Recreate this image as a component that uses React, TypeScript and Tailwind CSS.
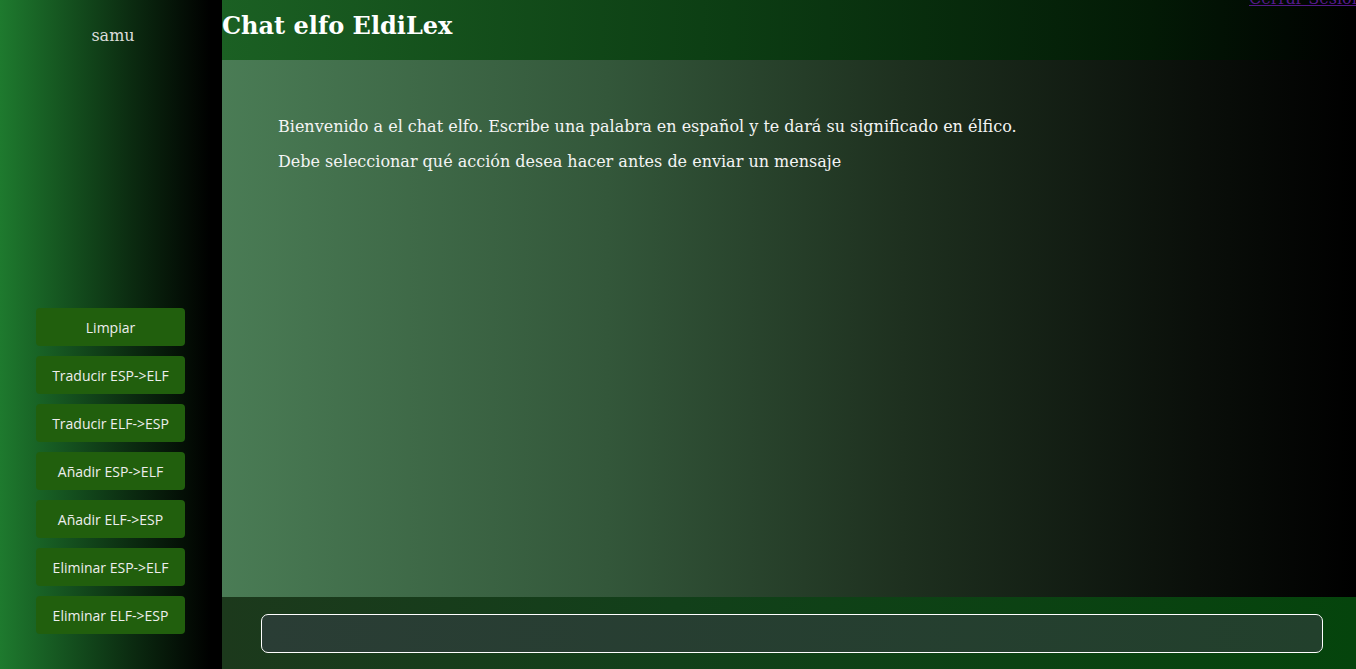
import React from 'react';

const ACTIONS = [
  'Limpiar',
  'Traducir ESP->ELF',
  'Traducir ELF->ESP',
  'Añadir ESP->ELF',
  'Añadir ELF->ESP',
  'Eliminar ESP->ELF',
  'Eliminar ELF->ESP',
];

const serif = "font-['DejaVu_Serif',serif]";

export default function App() {
  return (
    <div className={`flex h-[669px] w-[1356px] overflow-hidden ${serif}`}>
      {/* sidebar */}
      <aside className="flex w-[222px] shrink-0 flex-col bg-[linear-gradient(to_right,#1e7a2e,#0b2a10_60%,#000_95%)]">
        <h2 className="pl-[4px] pt-[26px] text-center text-[16px] leading-[19px] text-[#dddddd]">samu</h2>
        <div className="mt-auto mb-[35px] ml-[36px] flex flex-col gap-[10px]">
          {ACTIONS.map((a) => (
            <button
              key={a}
              className="h-[38px] w-[149px] rounded-[4px] bg-[#215f0d] font-['Open_Sans',sans-serif] text-[14px] text-[#eeeeee]"
            >
              {a}
            </button>
          ))}
        </div>
      </aside>

      {/* chat column */}
      <div className="flex min-w-0 flex-1 flex-col">
        <header className="relative h-[60px] shrink-0 bg-[linear-gradient(to_right,#1b6023,#0c3d13_45%,#031a06_82%,#000)]">
          <h1 className="pt-[12px] text-[24px] font-bold leading-[28px] text-white">Chat elfo EldiLex</h1>
          <a href="#" className="absolute left-[1027px] top-[-13px] whitespace-nowrap text-[16px] text-[#551a8b] underline">
            Cerrar Sesión
          </a>
        </header>

        <main className="flex flex-1 flex-col gap-[16px] bg-[linear-gradient(to_right,#4a7c55,#33573a_34%,#1e301f_60%,#0a0f0a_86%,#000)] px-[56px] pt-[57px] text-[16px] leading-[19px] text-[#f4f4f4]">
          <p>Bienvenido a el chat elfo. Escribe una palabra en español y te dará su significado en élfico.</p>
          <p>Debe seleccionar qué acción desea hacer antes de enviar un mensaje</p>
        </main>

        <footer className="flex h-[72px] shrink-0 items-center bg-[linear-gradient(to_right,#1c391c,#12401a_40%,#05440c)] pl-[39px] pr-[33px]">
          <input
            type="text"
            className="h-[39px] w-full rounded-[7px] border border-white bg-[linear-gradient(to_right,#2a3d35,#22402c)] px-3 text-white outline-none"
          />
        </footer>
      </div>
    </div>
  );
}
